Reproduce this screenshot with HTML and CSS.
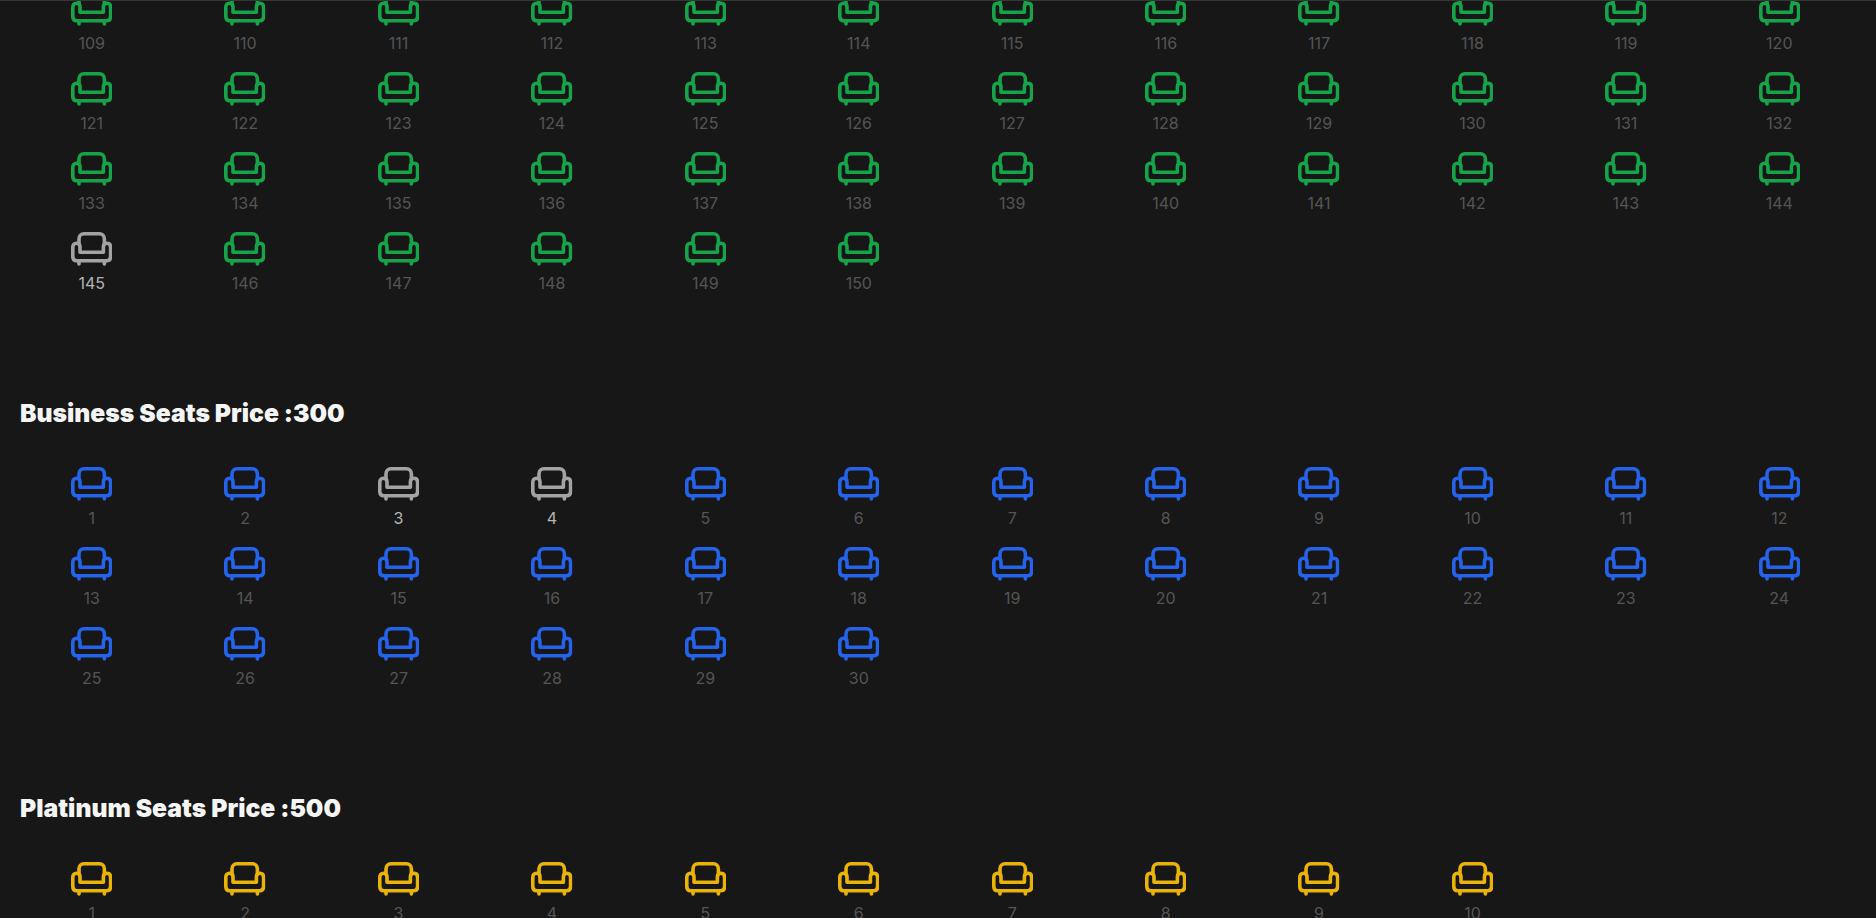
FILE: index.html
```html
<!DOCTYPE html>
<html lang="en">
<head>
  <meta charset="UTF-8" />
  <title>Seats</title>
  <link rel="stylesheet" href="styles.css">
</head>
<body>

<svg class="defs" width="0" height="0">
  <symbol id="couch" viewBox="0 0 41.400 34">
    <path d="M8 12V7C8 3.800 10 1.800 13 1.800H28.400C31.400 1.800 33.400 3.800 33.400 7V12" />
    <path d="M5.500 11.300C3 11.300 1.800 13 1.800 15.500V24.500C1.800 27 3.200 28.700 5.700 28.700H35.700C38.200 28.700 39.600 27 39.600 24.500V15.500C39.600 13 38.400 11.300 35.900 11.300C33.400 11.300 32.400 13 32.400 15V20.300H9V15C9 13 8 11.300 5.500 11.300Z" />
    <path d="M8 28.700V32M33.400 28.700V32" />
  </symbol>
</svg>

<div id="page" class="page"></div>

<script>
  const page = document.getElementById('page');

  const sections = [
    { title: '', type: 'regular', from: 109, to: 150, booked: [145] },
    { title: 'Business Seats Price :300', type: 'business', from: 1, to: 30, booked: [3, 4] },
    { title: 'Platinum Seats Price :500', type: 'platinum', from: 1, to: 10, booked: [] }
  ];

  sections.forEach(function(section) {
    const block = document.createElement('section');
    block.className = 'section ' + section.type;

    if (section.title) {
      const heading = document.createElement('h2');
      heading.textContent = section.title;
      block.appendChild(heading);
    }

    const grid = document.createElement('div');
    grid.className = 'seats';

    for (let n = section.from; n <= section.to; n++) {
      const isBooked = section.booked.includes(n);
      const seat = document.createElement('div');
      seat.className = isBooked ? 'seat booked' : 'seat';
      seat.innerHTML = '<svg class="icon"><use href="#couch"></use></svg><span>' + n + '</span>';
      grid.appendChild(seat);
    }

    block.appendChild(grid);
    page.appendChild(block);
  });
</script>

</body>
</html>
```

FILE: styles.css
```css
html, body {
  margin: 0;
  height: 100%;
  overflow: hidden;
  background-color: #171717;
}

body {
  font-family: "Inter", "Liberation Sans", sans-serif;
  font-feature-settings: "calt" 0;
  border-top: 1px solid #363636;
  box-sizing: border-box;
}

.defs {
  position: absolute;
}

.page {
  margin-top: -9px;
  padding: 0 20px 0 15px;
}

.section {
  margin-bottom: 81px;
}

h2 {
  margin: 0 0 34px 5px;
  height: 40px;
  line-height: 40px;
  font-size: 24.700px;
  font-weight: 900;
  color: #f5f5f5;
}

.seats {
  display: grid;
  grid-template-columns: repeat(12, 1fr);
  grid-auto-rows: 80px;
}

.seat {
  display: flex;
  flex-direction: column;
  align-items: center;
  font-size: 16px;
  color: #555;
}

.icon {
  width: 41.400px;
  height: 34px;
  margin-bottom: 7px;
  fill: none;
  stroke-width: 3.600;
  stroke-linecap: round;
  stroke-linejoin: round;
}

.regular .icon {
  stroke: #16a34a;
}

.business .icon {
  stroke: #2563eb;
}

.platinum .icon {
  stroke: #eab308;
}

.seat.booked {
  color: #b4b4b4;
}

.seat.booked .icon {
  stroke: #a3a3a3;
}
```
